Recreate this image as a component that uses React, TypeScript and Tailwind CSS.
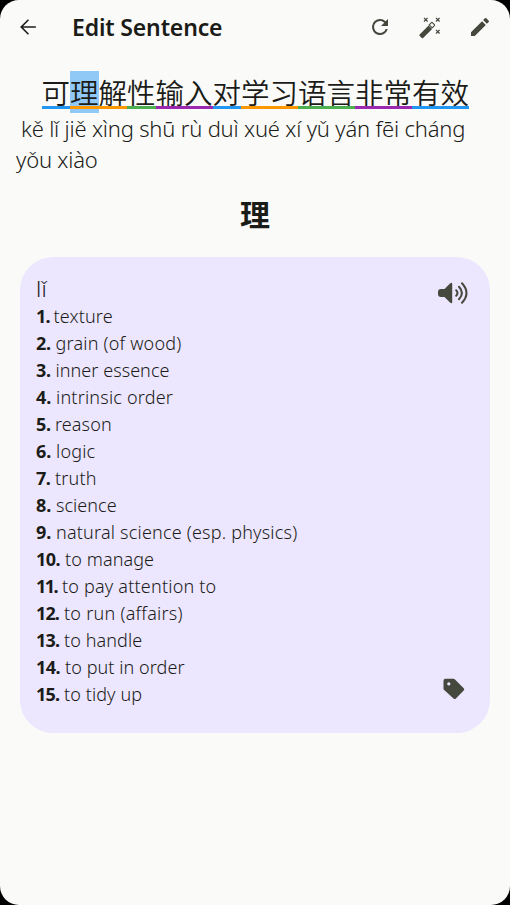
import React from "react";

const sentence = [
  { c: "可", line: "bg-[#2196f3]" },
  { c: "理", line: "bg-[#ff9800]", selected: true },
  { c: "解", line: "bg-[#ff9800]" },
  { c: "性", line: "bg-[#4caf50]" },
  { c: "输", line: "bg-[#9c27b0]" },
  { c: "入", line: "bg-[#9c27b0]" },
  { c: "对", line: "bg-[#2196f3]" },
  { c: "学", line: "bg-[#ff9800]" },
  { c: "习", line: "bg-[#ff9800]" },
  { c: "语", line: "bg-[#4caf50]" },
  { c: "言", line: "bg-[#4caf50]" },
  { c: "非", line: "bg-[#9c27b0]" },
  { c: "常", line: "bg-[#9c27b0]" },
  { c: "有", line: "bg-[#2196f3]" },
  { c: "效", line: "bg-[#2196f3]" },
];

const meanings = [
  { text: "texture", num: "w-[17.5px] tracking-[-0.9px]", track: "tracking-[0.15px]" },
  { text: "grain (of wood)", num: "w-[19.5px] tracking-[-0.2px]", track: "tracking-[0.2px]" },
  { text: "inner essence", num: "w-[19.5px] tracking-[-0.2px]", track: "tracking-[0.05px]" },
  { text: "intrinsic order", num: "w-5 tracking-normal", track: "tracking-[0.2px]" },
  { text: "reason", num: "w-[19px] tracking-[-0.2px]", track: "tracking-[0.1px]" },
  { text: "logic", num: "w-5 tracking-normal", track: "tracking-[0.2px]" },
  { text: "truth", num: "w-[19px] tracking-[-0.5px]", track: "tracking-[0.2px]" },
  { text: "science", num: "w-5 tracking-normal", track: "tracking-[0.05px]" },
  { text: "natural science (esp. physics)", num: "w-5 tracking-normal", track: "tracking-[0.2px]" },
  { text: "to manage", num: "w-[29px] tracking-[-0.5px]", track: "tracking-[0.1px]" },
  { text: "to pay attention to", num: "w-[26px] tracking-[-1.6px]", track: "tracking-[0.2px]" },
  { text: "to run (affairs)", num: "w-[28px] tracking-[-0.9px]", track: "tracking-[0.25px]" },
  { text: "to handle", num: "w-[28px] tracking-[-0.8px]", track: "tracking-[0.1px]" },
  { text: "to put in order", num: "w-[29px] tracking-[-0.5px]", track: "tracking-[0.07px]" },
  { text: "to tidy up", num: "w-[28px] tracking-[-0.8px]", track: "tracking-[0.1px]" },
];

function Icon({ d, className }: { d: string; className: string }) {
  return (
    <svg viewBox="0 0 24 24" className={className} fill="currentColor">
      <path d={d} />
    </svg>
  );
}

export default function App() {
  return (
    <div className="h-[905px] w-[510px] overflow-hidden bg-black">
      <div className="flex h-full flex-col overflow-hidden rounded-[19px] bg-[#fafaf8] font-['Noto_Sans','Noto_Sans_CJK_SC',sans-serif] text-[#1b1c18]">
        <header className="flex h-[54px] shrink-0 items-center pr-[18px] pl-4 text-[#45483d]">
          <Icon className="size-6 text-[#1b1c18]" d="M19.8 11.2H7.1l5.9-5.9L11.9 4.2 4.1 12l7.8 7.8 1.1-1.1-5.9-5.9h12.7z" />
          <h1 className="ml-8 flex-1 text-[23px] leading-[54px] font-semibold tracking-[-0.15px] whitespace-nowrap text-[#1b1c18]">Edit Sentence</h1>
          <Icon
            className="mr-[26px] size-6"
            d="M17.65 6.35A7.96 7.96 0 0 0 12 4a8 8 0 1 0 7.73 10h-2.08A6 6 0 1 1 12 6c1.66 0 3.14.69 4.22 1.78L13 11h7V4z"
          />
          <svg viewBox="0 0 24 24" className="mr-[26px] size-6">
            <path d="M1.6 19.4 10.6 10.4l3.5 3.5L5.1 22.9q-.7.6-1.4 0l-2.1-2.1q-.6-.7 0-1.4z" fill="currentColor" />
            <path d="m11.2 9.8 2-2q.7-.7 1.4 0l1.6 1.6q.7.7 0 1.4l-2 2z" fill="none" stroke="currentColor" strokeWidth="1.1" />
            <path
              d="m6 2.9 3.6 3.6m0-3.6L6 6.5m12-3.6 3.6 3.6m0-3.6L18 6.5m0 8.4 3.6 3.6m0-3.6L18 18.5"
              stroke="currentColor"
              strokeWidth="1.2"
            />
          </svg>
          <Icon
            className="size-6"
            d="M3 17.25V21h3.75L17.81 9.94l-3.75-3.75zM20.71 7.04a1 1 0 0 0 0-1.41l-2.34-2.34a1 1 0 0 0-1.41 0l-1.83 1.83 3.75 3.75z"
          />
        </header>

        <div className="mt-[17px] ml-[41.5px] flex h-[42px] shrink-0">
          {sentence.map((s, i) => (
            <div key={i} className={"relative h-[42px] w-[28.5px] text-center font-['Noto_Sans_CJK_SC',sans-serif] text-[28.5px] leading-[41px] font-[350] " + (s.selected ? "bg-[#90c8f6]" : "")}>
              {s.c}
              <span className={"absolute top-[35px] left-0 h-[3px] w-full " + s.line} />
            </div>
          ))}
        </div>

        <p className="ml-4 h-[62px] shrink-0 text-[22px] leading-[31px] font-light tracking-[-0.19px] whitespace-nowrap">
          <span className="ml-[5px]">kě lǐ jiě xìng shū rù duì xué xí yǔ yán fēi cháng</span>
          <br />
          yǒu xiào
        </p>

        <h2 className="mt-4 h-[44px] shrink-0 text-center font-['Noto_Sans_CJK_SC',sans-serif] text-[30px] leading-[44px] font-bold">理</h2>

        <section className="mx-5 mt-[22px] flex h-[476px] shrink-0 justify-between rounded-[33px] bg-[#ece6fe] pt-4 pr-[21px] pl-4">
          <div>
            <div className="h-[30px] text-[22.5px] leading-[31px] font-light tracking-[0.3px]">lǐ</div>
            <ol>
              {meanings.map((m, i) => (
                <li key={m.text} className="flex h-[27px] text-[18px] leading-[27px] font-light whitespace-nowrap">
                  <b className={"shrink-0 font-bold " + m.num}>{i + 1}.</b>
                  <span className={m.track}>{m.text}</span>
                </li>
              ))}
            </ol>
          </div>
          <div className="flex flex-col items-end justify-between pt-2 pb-[32px] text-[#45483d]">
            <svg viewBox="0 0 32 24" className="h-6 w-8">
              <path d="M1 11q0-3 3-3h3.5L13 2.4q2.2-1.7 2.2.6v18q0 2.3-2.2.6L7.5 16H4q-3 0-3-3z" fill="currentColor" />
              <path d="M19.2 9.2q2.6 2.8 0 5.6M22 5.8q5.8 6.2 0 12.4M25 2.2q9 9.8 0 19.6" fill="none" stroke="currentColor" strokeWidth="2" strokeLinecap="round" />
            </svg>
            <svg viewBox="0 0 24 24" className="mr-[3px] size-6">
              <path
                fillRule="evenodd"
                d="M1.5 3.8q0-2 2-2h7.8q1 0 1.7.7l8.7 8.7q1.2 1.2 0 2.4l-7.8 7.8q-1.2 1.2-2.4 0L2.2 13.1q-.7-.7-.7-1.7zM6.8 5.3a1.6 1.6 0 1 0 .01 0z"
                fill="currentColor"
              />
            </svg>
          </div>
        </section>
      </div>
    </div>
  );
}
